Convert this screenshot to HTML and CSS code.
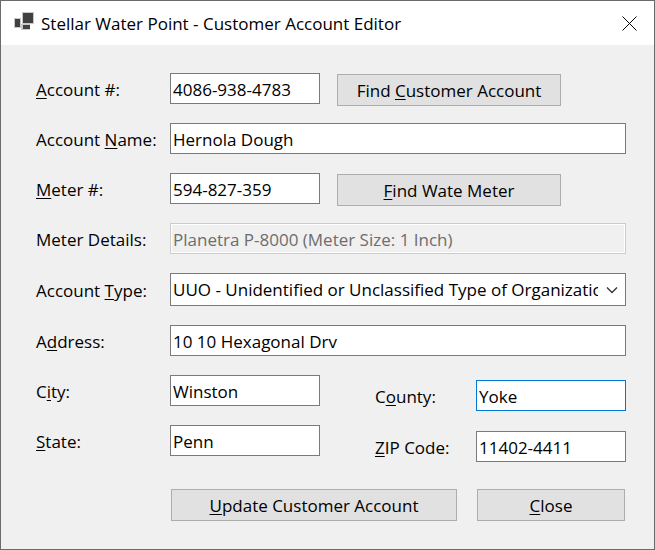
FILE: index.html
```html
<!DOCTYPE html>
<html lang="en">
<head>
<meta charset="utf-8">
<title>Stellar Water Point - Customer Account Editor</title>
<link rel="stylesheet" href="styles.css">
</head>
<body>
<main class="window">
  <header class="titlebar">
    <svg class="app-icon" viewBox="0 0 20 18" aria-hidden="true">
      <path class="icon-edge" d="M8 0h12v12H8zM0 6h7v10H0zM7 12h9v6H7z"/>
      <path class="icon-fill" d="M9 1h10v10H9zM1 7h5v8H1zM9 13h7v4H9z"/>
    </svg>
    <h1 class="title">Stellar Water Point - Customer Account Editor</h1>
    <button class="close-window" type="button" aria-label="Close window">
      <svg viewBox="0 0 15 15" aria-hidden="true"><path d="M.5.5l14 14M14.5.5l-14 14"/></svg>
    </button>
  </header>
  <form class="editor">
    <div class="row">
      <label for="account-number"><u>A</u>ccount #:</label>
      <div class="lookup">
        <input id="account-number" class="short" type="text" value="4086-938-4783">
        <button class="find" type="button">Find <u>C</u>ustomer Account</button>
      </div>
    </div>
    <div class="row">
      <label for="account-name">Account <u>N</u>ame:</label>
      <input id="account-name" type="text" value="Hernola Dough">
    </div>
    <div class="row">
      <label for="meter-number"><u>M</u>eter #:</label>
      <div class="lookup">
        <input id="meter-number" class="short" type="text" value="594-827-359">
        <button class="find" type="button"><u>F</u>ind Wate Meter</button>
      </div>
    </div>
    <div class="row">
      <label for="meter-details">Meter Details:</label>
      <input id="meter-details" type="text" value="Planetra P-8000 (Meter Size: 1 Inch)" disabled>
    </div>
    <div class="row">
      <label for="account-type">Account <u>T</u>ype:</label>
      <div class="combo">
        <select id="account-type">
          <option>UUO - Unidentified or Unclassified Type of Organization</option>
        </select>
        <svg class="chevron" viewBox="0 0 12 8" aria-hidden="true"><path d="M1 1.5l5 5 5-5"/></svg>
      </div>
    </div>
    <div class="row">
      <label for="address">A<u>d</u>dress:</label>
      <input id="address" type="text" value="10 10 Hexagonal Drv">
    </div>
    <div class="places">
      <div class="stack">
        <div class="row">
          <label for="city">C<u>i</u>ty:</label>
          <input id="city" class="short" type="text" value="Winston">
        </div>
        <div class="row">
          <label for="state"><u>S</u>tate:</label>
          <input id="state" class="short" type="text" value="Penn">
        </div>
      </div>
      <div class="stack region">
        <div class="row">
          <label for="county">C<u>o</u>unty:</label>
          <input id="county" class="short active" type="text" value="Yoke">
        </div>
        <div class="row">
          <label for="zip"><u>Z</u>IP Code:</label>
          <input id="zip" class="short" type="text" value="11402-4411">
        </div>
      </div>
    </div>
    <div class="actions">
      <button type="submit"><u>U</u>pdate Customer Account</button>
      <button type="button"><u>C</u>lose</button>
    </div>
  </form>
</main>
</body>
</html>
```
FILE: styles.css
```css
* { box-sizing: border-box; }

body {
  margin: 0;
  background: #f0f0f0;
  color: #000;
  font: 17px/24px "Segoe UI", "Open Sans", "Noto Sans", sans-serif;
}

.window {
  min-height: 100vh;
  border: 1px solid #6b6b6b;
  background: #f0f0f0;
}

.titlebar {
  display: flex;
  align-items: center;
  gap: 7px;
  height: 44px;
  padding: 0 17px 0 13px;
  background: #fff;
}

.app-icon {
  width: 20px;
  height: 18px;
  flex: none;
  margin-bottom: 4px;
}

.icon-edge { fill: #c8c8c8; }
.icon-fill { fill: #404040; }

.title {
  flex: 1;
  margin: 0;
  padding-top: 2px;
  font-size: 17px;
  font-weight: 400;
  white-space: nowrap;
}

.close-window {
  display: flex;
  padding: 0;
  border: 0;
  background: none;
}

.close-window svg {
  width: 15px;
  height: 15px;
  fill: none;
  stroke: #000;
}

.editor {
  padding: 28px 28px 28px 35px;
  display: flex;
  flex-direction: column;
  gap: 19px;
}

.row {
  display: grid;
  grid-template-columns: 134px 1fr;
  align-items: center;
}

label {
  padding-top: 2px;
  white-space: nowrap;
}

u {
  text-decoration-thickness: 1px;
  text-underline-offset: 2px;
  text-decoration-skip-ink: none;
}

input,
select {
  width: 100%;
  height: 31px;
  margin: 0;
  padding: 2px 2px 0;
  border: 1px solid #7a7a7a;
  border-radius: 0;
  outline: 0;
  background: #fff;
  color: #000;
  font: inherit;
}

input:disabled {
  border-color: #ccc;
  background: #f0f0f0;
  box-shadow: inset 0 0 0 1px #fff;
  color: #6d6d6d;
}

.short { width: 150px; }
.active { border-color: #0078d7; }

.lookup {
  display: flex;
  align-items: flex-start;
  gap: 17px;
}

.combo { position: relative; }

select {
  display: block;
  height: 33px;
  padding: 0 27px 0 2px;
  appearance: none;
}

.chevron {
  position: absolute;
  top: 13px;
  right: 8px;
  width: 12px;
  height: 8px;
  fill: none;
  stroke: #333;
  stroke-width: 1.3;
  pointer-events: none;
}

.find,
.actions button {
  height: 32px;
  padding: 2px 8px 0;
  border: 1px solid #adadad;
  background: #e1e1e1;
  color: #000;
  font: inherit;
  white-space: nowrap;
}

.find {
  width: 224px;
  margin: 1px 0 -2px;
}

.places {
  display: flex;
  justify-content: space-between;
  align-items: flex-start;
}

.stack {
  display: grid;
  gap: 19px;
}

.region {
  gap: 20px;
  margin-top: 5px;
}

.region .row { grid-template-columns: 101px 1fr; }

.actions {
  display: grid;
  grid-template-columns: 286fr 148fr;
  gap: 20px;
  margin-top: 8px;
  padding: 0 1px 0 135px;
}
```
